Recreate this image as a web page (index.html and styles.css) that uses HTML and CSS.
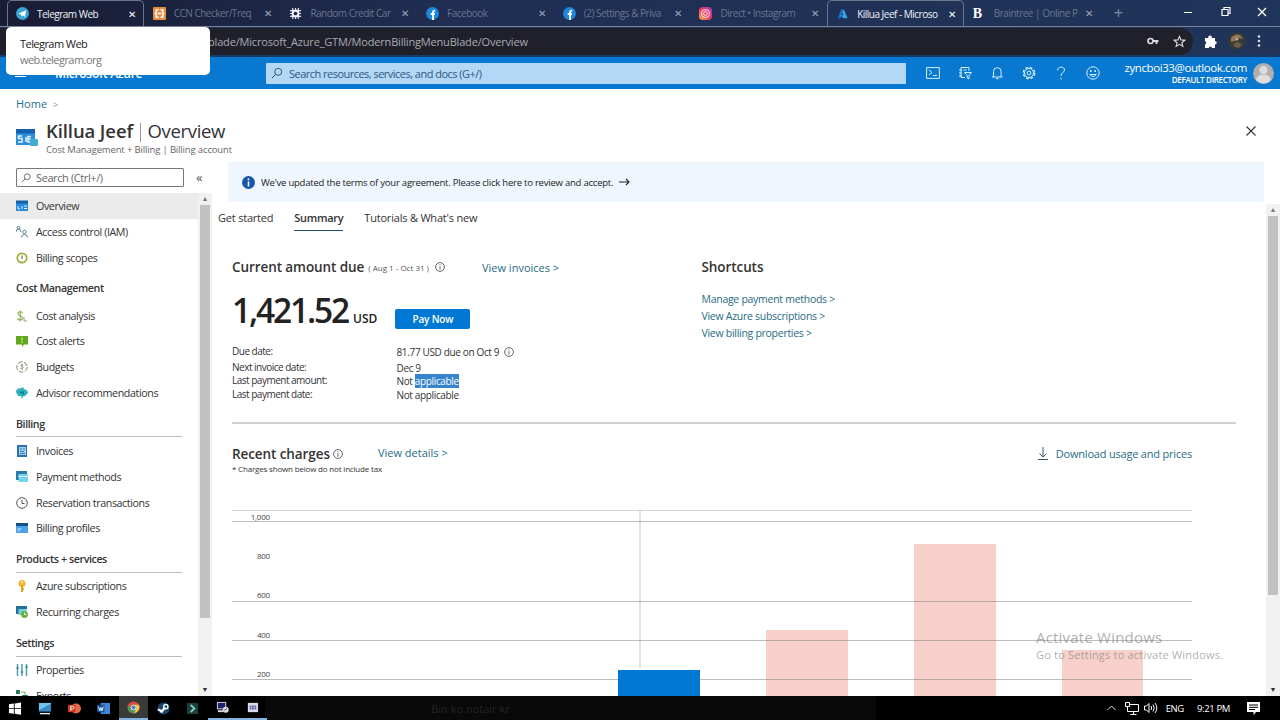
FILE: index.html
```html
<!DOCTYPE html>
<html lang="en">
<head>
    <meta charset="UTF-8">
    <meta name="viewport" content="width=device-width, initial-scale=1.0">
    <title>Killua Jeef - Microsoft Azure</title>
    <link rel="stylesheet" href="styles.css">
</head>
<body>
    <!-- Browser tabs -->
    <div class="tabs">
        <div class="tab active">
            <svg class="favicon" viewBox="0 0 14 14"><circle cx="7" cy="7" r="7" fill="#37a5d2"/><path d="M2.5 7 11 3.4 9.6 10.8 7 9 5.6 10.4 5.3 8z" fill="#fff"/></svg>
            <span class="tab-title">Telegram Web</span><span class="close">✕</span>
        </div>
        <div class="tab">
            <svg class="favicon" viewBox="0 0 14 14"><rect width="14" height="14" rx="1" fill="#e88b3e"/><path d="M6 3H3.500v3L2.500 7l1 1v3H6M8 3h2.500v3l1 1-1 1v3H8M5 7h4" fill="none" stroke="#fff" stroke-width="1.500"/></svg>
            <span class="tab-title">CCN Checker/Treq</span><span class="close">✕</span>
        </div>
        <div class="tab">
            <svg class="favicon" viewBox="0 0 14 14"><path d="M4 1v12M7 1v12M10 1v12M1 4h12M1 7h12M1 10h12" stroke="#dde" stroke-width="1.300"/><rect x="3" y="3" width="8" height="8" rx="2" fill="#eef"/><circle cx="7" cy="7" r="2" fill="#1d2947"/></svg>
            <span class="tab-title">Random Credit Car</span><span class="close">✕</span>
        </div>
        <div class="tab">
            <svg class="favicon" viewBox="0 0 14 14"><circle cx="7" cy="7" r="7" fill="#1d87dd"/><path d="M7.600 14V5.500q0-1.600 2.200-1.400M5 7.500h4.600" fill="none" stroke="#fff" stroke-width="2"/></svg>
            <span class="tab-title">Facebook</span><span class="close">✕</span>
        </div>
        <div class="tab">
            <svg class="favicon" viewBox="0 0 14 14"><circle cx="7" cy="7" r="7" fill="#1d87dd"/><path d="M7.600 14V5.500q0-1.600 2.200-1.400M5 7.500h4.600" fill="none" stroke="#fff" stroke-width="2"/></svg>
            <span class="tab-title">(2) Settings &amp; Priva</span><span class="close">✕</span>
        </div>
        <div class="tab">
            <svg class="favicon" viewBox="0 0 14 14"><defs><linearGradient id="insta" x1="0" y1="1" x2="1" y2="0"><stop offset="0" stop-color="#fcb045"/><stop offset=".5" stop-color="#e8355f"/><stop offset="1" stop-color="#a13ac4"/></linearGradient></defs><rect width="14" height="14" rx="4" fill="url(#insta)"/><rect x="3" y="3" width="8" height="8" rx="2.500" fill="none" stroke="#fff"/><circle cx="7" cy="7" r="2" fill="none" stroke="#fff"/></svg>
            <span class="tab-title">Direct • Instagram</span><span class="close">✕</span>
        </div>
        <div class="tab active">
            <svg class="favicon" viewBox="0 0 14 14"><path d="M5.500 2.500h3L5 12H1.800z" fill="#1b6fc0"/><path d="M8.500 2.500 12.500 12H8L5 9h3L6.800 6z" fill="#37a3e8"/></svg>
            <span class="tab-title">Killua Jeef - Microso</span><span class="close">✕</span>
        </div>
        <div class="tab">
            <span class="favicon letter">B</span>
            <span class="tab-title">Braintree | Online P</span><span class="close">✕</span>
        </div>
        <span class="new-tab">+</span>
        <div class="window-buttons">
            <svg width="84" height="14" viewBox="0 0 84 14"><path d="M0 7.500h8M38 4.500h6v6h-6zM40 4.500v-2h6v6h-2" fill="none" stroke="#fff" stroke-width="1.200"/><path d="M74 3l8 8M82 3l-8 8" stroke="#fff" stroke-width="1.300"/></svg>
        </div>
    </div>

    <!-- Address bar -->
    <div class="address">
        <div class="omnibox">
            <span class="url">blade/Microsoft_Azure_GTM/ModernBillingMenuBlade/Overview</span>
            <svg width="12" height="12" viewBox="0 0 12 12"><circle cx="3.500" cy="6" r="2.500" fill="none" stroke="#ddd" stroke-width="1.600"/><path d="M6 6h5.500M9.500 6v3" stroke="#ddd" stroke-width="1.800"/></svg>
            <svg width="13" height="13" viewBox="0 0 14 14"><path d="M7 1.500 8.600 5.300l4.200.3-3.200 2.700 1 4L7 10.100l-3.600 2.200 1-4L1.200 5.600l4.200-.3z" fill="none" stroke="#ddd" stroke-width="1.200"/></svg>
        </div>
        <svg width="13" height="13" viewBox="0 0 13 13"><path d="M1 3h3.200a1.900 1.900 0 1 1 3.600 0H11v3a1.700 1.700 0 1 1 0 3.400V13H8a1.600 1.600 0 0 0-3.200 0H1V9.500a1.700 1.700 0 0 0 0-3.300z" fill="#fff"/></svg>
        <svg width="18" height="18" viewBox="0 0 18 18"><circle cx="9" cy="9" r="8.500" fill="#3a3a34"/><path d="M3 6q4-5 9-3l3 4-5-1-3 3-4 1z" fill="#91795b"/><path d="M5 12l4-2 5 2-3 4-4-1z" fill="#6e5c46"/><circle cx="9" cy="7" r="1.500" fill="#c2ab8a"/></svg>
        <svg width="4" height="14" viewBox="0 0 4 14"><circle cx="2" cy="2.500" r="1.300" fill="#ddd"/><circle cx="2" cy="7" r="1.300" fill="#ddd"/><circle cx="2" cy="11.500" r="1.300" fill="#ddd"/></svg>
    </div>

    <!-- Azure top bar -->
    <div class="azure-bar">
        <svg class="menu-icon" width="12" height="10" viewBox="0 0 12 10"><path d="M0 .5h11M0 4.500h11M0 8.500h11" stroke="#fff"/></svg>
        <span class="brand">Microsoft Azure</span>
        <div class="search">
            <svg width="12" height="12" viewBox="0 0 12 12"><circle cx="7.200" cy="4.800" r="3.500" fill="none" stroke="#31577e"/><path d="M4.700 7.300 1 11" stroke="#31577e"/></svg>
            <span>Search resources, services, and docs (G+/)</span>
        </div>
        <div class="bar-icons">
            <svg width="14" height="14" viewBox="0 0 14 14"><path d="M.6 1.600h12.800v10.800H.6zM3 4l3 2.500L3 9M7 9.500h4"/></svg>
            <svg width="14" height="14" viewBox="0 0 14 14"><path d="M11 5V1.500H3v10h4M1 4h3M1 7h3M1 10h3M5.500 4h3M6.500 6.500h7L11 9.500V13L9.200 12V9.500z"/></svg>
            <svg width="14" height="14" viewBox="0 0 14 14"><path d="M2 11h10.500M3.500 11V5.500a3.800 3.800 0 0 1 7.600 0V11M6 12.700h2.500"/></svg>
            <svg width="14" height="14" viewBox="0 0 14 14"><circle cx="7" cy="7" r="5.700" stroke-width="1.300" stroke-dasharray="2.800 1.680"/><circle cx="7" cy="7" r="4.500"/><circle cx="7" cy="7" r="1.900"/></svg>
            <svg width="14" height="14" viewBox="0 0 14 14"><path d="M3.500 4.500C3.500 0 10.500 0 10.500 4 10.500 6.500 7 6.500 7 10M7 11.700v1.600"/></svg>
            <svg width="14" height="14" viewBox="0 0 14 14"><circle cx="7" cy="7" r="6.200"/><path d="M3.700 8.500q3.300 4 6.600 0z"/><path d="M4.800 4v2M9.200 4v2" stroke-width="1.500"/></svg>
        </div>
        <div class="account">
            <div class="email">zyncboi33@outlook.com</div>
            <div class="directory">DEFAULT DIRECTORY</div>
        </div>
        <svg width="21" height="21" viewBox="0 0 21 21"><circle cx="10.500" cy="10.500" r="10.500" fill="#b1aeae"/><circle cx="10.500" cy="7" r="4" fill="#dedcdc"/><path d="M3 17q1-5.500 7.500-5.500T18 17q-7 7-15 0z" fill="#dedcdc"/></svg>
    </div>

    <!-- Tooltip of the first browser tab -->
    <div class="tab-tooltip">
        <div>Telegram Web</div>
        <div class="host">web.telegram.org</div>
    </div>

    <!-- Page title -->
    <div class="blade-header">
        <div class="breadcrumb">Home <span>&gt;</span></div>
        <div class="blade-row">
            <svg width="22" height="18" viewBox="0 0 22 18"><rect width="19" height="5" fill="#1561ae"/><rect y="4.500" width="19" height="11.500" fill="#2d8edb"/><path d="M6 7H2.500v2.500H6V13H2M10 8v5M15 7.500h-3V13h3M12 10h3" fill="none" stroke="#e3f4ff" stroke-width="1.500"/><rect x="14" y="10" width="8" height="7" rx="1" fill="#42aecb"/></svg>
            <div>
                <h1>Killua Jeef <i></i> <span>Overview</span></h1>
                <div class="subtitle">Cost Management + Billing | Billing account</div>
            </div>
            <svg class="blade-close" width="10" height="10" viewBox="0 0 10 10"><path d="M.5.5l9 9M9.500.5l-9 9" stroke="#333" stroke-width="1.100"/></svg>
        </div>
    </div>

    <div class="content">
        <!-- Left menu -->
        <div class="sidebar">
            <div class="side-search">
                <div class="side-input">
                    <svg width="10" height="10" viewBox="0 0 12 12"><circle cx="7.500" cy="4.500" r="3.500" fill="none" stroke="#555"/><path d="M5 7 1 11" stroke="#555"/></svg>
                    Search (Ctrl+/)
                </div>
                <span class="collapse">«</span>
            </div>
            <div class="side-body">
                <div class="menu">
                    <div class="item selected"><svg viewBox="0 0 12 12"><rect y="1" width="12" height="10" fill="#258bdb"/><path d="M0 2h12" stroke="#1661a8" stroke-width="3"/><path d="M2 6v3h2M6 6v3M8 6h3M8 8.500h3" fill="none" stroke="#e0f4ff"/></svg>Overview</div>
                    <div class="item"><svg viewBox="0 0 12 12"><path d="M0 6q0-3 2.500-3T5 6M5.500 11.500q0-3 3-3t3 3" fill="none" stroke="#5d8296"/><circle cx="2.500" cy="1.500" r="1.400" fill="none" stroke="#5d8296"/><circle cx="8.500" cy="6" r="1.700" fill="none" stroke="#5d8296"/></svg>Access control (IAM)</div>
                    <div class="item"><svg viewBox="0 0 12 12"><circle cx="6" cy="6" r="4.700" fill="#fff" stroke="#9caf36" stroke-width="1.700"/><path d="M6 3.500V7" stroke="#668c3a" stroke-width="1.300"/></svg>Billing scopes</div>
                    <h3>Cost Management</h3>
                    <div class="item"><svg viewBox="0 0 12 12"><path d="M6.500 3C6 1 1.500 1.500 2 4c.4 2 4.500 1.500 4.500 4S2 10.500 1.500 8.500M4.200.5v11" fill="none" stroke="#8fb04f" stroke-width="1.100"/><path d="M8 7v4h3" fill="none" stroke="#9a9c90"/></svg>Cost analysis</div>
                    <div class="item"><svg viewBox="0 0 12 12"><path d="M0 1h12v8.500H8L6 12V9.500H0z" fill="#62a81f"/><path d="M6 2.500v3M6 6.500v1.500" stroke="#d9f0ac" stroke-width="1.200"/></svg>Cost alerts</div>
                    <div class="item"><svg viewBox="0 0 12 12"><circle cx="6" cy="6" r="5.200" fill="none" stroke="#81906a" stroke-dasharray="5 1.500"/><path d="M7.500 4Q4.500 3 4.700 5 7.500 5.500 7.300 7 6.500 8.500 4.500 7.500M6 2.500v7" fill="none" stroke="#89967a" stroke-width=".8"/></svg>Budgets</div>
                    <div class="item"><svg viewBox="0 0 12 12"><path d="M0 5q0-4 5-3.700L7 0l1 2q4 1 4 4L9 9l-2 .5L6 12 5 9H2z" fill="#2eb2bf"/><path d="M3 5l5-1v4z" fill="#187f94"/></svg>Advisor recommendations</div>
                    <h3 class="ruled">Billing</h3>
                    <div class="item"><svg viewBox="0 0 12 12"><rect x="1" width="10" height="12" fill="#2b6fae"/><rect x="3" y="2" width="7" height="8" fill="#9fcef1"/><path d="M4 4h2M7 4h2M4 6.500h4M4 8.500h5" stroke="#377bb4"/></svg>Invoices</div>
                    <div class="item"><svg viewBox="0 0 12 12"><path d="M0 0h11v3H3v6H0z" fill="#277cac"/><rect x="2.500" y="3" width="9.500" height="8" fill="#71d5ef"/><path d="M2.500 5.500H12" stroke="#fff"/></svg>Payment methods</div>
                    <div class="item"><svg viewBox="0 0 12 12"><circle cx="6" cy="6" r="5.300" fill="none" stroke="#555"/><path d="M6 3v3.500h2.500" fill="none" stroke="#555"/></svg>Reservation transactions</div>
                    <div class="item"><svg viewBox="0 0 12 12"><rect y="1" width="12" height="10" fill="#4ba1e8"/><path d="M0 2.500h12" stroke="#134f88" stroke-width="3"/><path d="M1.500 7h4M1.500 9h2" stroke="#c7e8ff"/></svg>Billing profiles</div>
                    <h3 class="ruled">Products + services</h3>
                    <div class="item"><svg viewBox="0 0 12 12"><circle cx="6" cy="3.500" r="3.500" fill="#f3b42e"/><path d="M6 5v7M6 9h2" stroke="#eaa51f" stroke-width="2"/><circle cx="6" cy="2.200" r="1" fill="#fff1c2"/></svg>Azure subscriptions</div>
                    <div class="item"><svg viewBox="0 0 12 12"><path d="M0 0h11v3H3v5H0z" fill="#236f96"/><rect x="2.500" y="3" width="8" height="6" fill="#70cedf"/><circle cx="8.500" cy="8.500" r="3.400" fill="#60b23d"/><path d="M8.500 6.500v2.200h1.700" fill="none" stroke="#fff"/></svg>Recurring charges</div>
                    <h3 class="ruled">Settings</h3>
                    <div class="item"><svg viewBox="0 0 12 12"><path d="M1.500 0v12M6 0v12M10.500 0v12" stroke="#429aad" stroke-width="1.400"/><path d="M.3 4h2.400M4.800 8h2.400M9.300 3h2.400" stroke="#235e70"/></svg>Properties</div>
                    <div class="item"><svg viewBox="0 0 12 12"><path d="M0 0h4v4H0zM0 6h4v5H0zM6 5h6v6H6z" fill="#28765f"/><path d="M5 2h4v3" fill="none" stroke="#68b84b"/></svg>Exports</div>
                </div>
                <div class="scrollbar">
                    <span>▲</span>
                    <div class="thumb side-thumb"></div>
                    <span class="down">▼</span>
                </div>
            </div>
        </div>

        <!-- Billing overview -->
        <div class="main">
            <div class="notice">
                <svg width="13" height="13" viewBox="0 0 13 13"><circle cx="6.500" cy="6.500" r="6.500" fill="#1655a8"/><path d="M6.500 2.500v1.800M6.500 5.500v5" stroke="#fff" stroke-width="1.600"/></svg>
                <span>We've updated the terms of your agreement. Please click here to review and accept.</span>
                <svg width="11" height="8" viewBox="0 0 11 8"><path d="M0 4h10M7 1l3 3-3 3" fill="none" stroke="#222" stroke-width="1.100"/></svg>
            </div>
            <div class="main-body">
                <div class="overview">
                    <div class="page-tabs">
                        <span class="t-start">Get started</span>
                        <span class="t-summary">Summary</span>
                        <span class="t-tutorials">Tutorials &amp; What's new</span>
                    </div>
                    <div class="top-row">
                        <div class="due">
                            <div class="due-title">
                                <h2>Current amount due</h2>
                                <small>( Aug 1 - Oct 31 )</small>
                                <svg class="info" viewBox="0 0 10 10"><circle cx="5" cy="5" r="4.400"/><path d="M5 2.200v1M5 4.200v3.500"/></svg>
                                <a class="view-invoices">View invoices &gt;</a>
                            </div>
                            <div class="amount">
                                <b>1,421.52</b><strong>USD</strong>
                                <button>Pay Now</button>
                            </div>
                            <dl class="facts">
                                <dt>Due date:</dt><dd>81.77 USD due on Oct 9 <svg class="info" viewBox="0 0 10 10"><circle cx="5" cy="5" r="4.400"/><path d="M5 2.200v1M5 4.200v3.500"/></svg></dd>
                                <dt>Next invoice date:</dt><dd>Dec 9</dd>
                                <dt>Last payment amount:</dt><dd>Not <mark>applicable</mark></dd>
                                <dt>Last payment date:</dt><dd>Not applicable</dd>
                            </dl>
                        </div>
                        <div class="shortcuts">
                            <h2>Shortcuts</h2>
                            <a>Manage payment methods &gt;</a>
                            <a>View Azure subscriptions &gt;</a>
                            <a>View billing properties &gt;</a>
                        </div>
                    </div>
                    <hr>
                    <div class="charges-head">
                        <h2>Recent charges</h2>
                        <svg class="info" viewBox="0 0 10 10"><circle cx="5" cy="5" r="4.400"/><path d="M5 2.200v1M5 4.200v3.500"/></svg>
                        <a class="view-details">View details &gt;</a>
                        <a class="download"><svg width="10" height="13" viewBox="0 0 10 13"><path d="M5 0v10M1.500 6.500 5 10l3.500-3.500M0 12.500h10" fill="none" stroke="#33586f"/></svg>Download usage and prices</a>
                    </div>
                    <div class="note">* Charges shown below do not include tax</div>
                    <svg class="chart" width="960" height="186" viewBox="0 0 960 186">
                        <path d="M0 .5h960" stroke="#d6d6d6"/>
                        <path d="M408 0v158" stroke="#c8c8c8"/>
                        <rect x="534" y="120" width="82" height="66" fill="#f7d0ca"/>
                        <rect x="682" y="34" width="82" height="152" fill="#f7d0ca"/>
                        <rect x="830" y="140" width="81" height="46" fill="#f7d0ca"/>
                        <path d="M0 11.500h960M0 91.500h960M0 130.500h960M0 169.500h960" stroke="#7a7a7a" stroke-opacity=".5"/>
                        <rect x="386" y="160" width="82" height="26" fill="#0078d4"/>
                        <g class="axis">
                            <text x="38" y="10">1,000</text>
                            <text x="38" y="49">800</text>
                            <text x="38" y="88">600</text>
                            <text x="38" y="128">400</text>
                            <text x="38" y="167">200</text>
                        </g>
                    </svg>
                </div>
                <div class="scrollbar">
                    <span>▲</span>
                    <div class="thumb main-thumb"></div>
                    <span class="down">▼</span>
                </div>
            </div>
        </div>
    </div>

    <div class="watermark">
        <div class="big">Activate Windows</div>
        <div>Go to Settings to activate Windows.</div>
    </div>

    <!-- Windows taskbar -->
    <div class="taskbar">
        <div class="app"><svg viewBox="0 0 14 14"><path d="M1 2.500 6.300 1.700v5H1zM7.200 1.600 14 .6v6.100H7.200zM1 7.600h5.300v5L1 11.800zM7.200 7.600H14v6l-6.800-1z" fill="#fff"/></svg></div>
        <div class="app"><svg viewBox="0 0 14 14"><rect x="1" y="1" width="13" height="9" fill="#6fc0ec"/><path d="M1 9 14 2v8H1z" fill="#348ac4"/><path d="M2 12.500h11" stroke="#dcefff" stroke-width="1.500"/></svg></div>
        <div class="app"><svg viewBox="0 0 14 14"><circle cx="8.500" cy="7" r="5.500" fill="#e56a4b"/><rect y="3" width="8" height="8" fill="#c4381f"/><path d="M3 9.500v-5h2q1.500 0 1.500 1.500T5 7.500H3" fill="none" stroke="#fff"/></svg></div>
        <div class="app"><svg viewBox="0 0 14 14"><rect x="4" y="1" width="10" height="12" fill="#3f87d2"/><rect y="3" width="8" height="8" fill="#174f9d"/><path d="M1.500 5 3 9.500 4.200 6l1.200 3.500L6.800 5" fill="none" stroke="#fff"/></svg></div>
        <div class="app current"><svg viewBox="0 0 14 14"><circle cx="7" cy="7" r="6.500" fill="#dd4e3c"/><path d="M.8 4.500Q0 12 7.500 13.500L10 8 5 9z" fill="#3aa356"/><path d="M7 4h6q2 7-5.500 9.500L10 8z" fill="#f0c64c"/><circle cx="7" cy="7" r="3" fill="#fff"/><circle cx="7" cy="7" r="2.300" fill="#5587bd"/></svg></div>
        <div class="app"><svg viewBox="0 0 14 14"><circle cx="7" cy="7" r="6.500" fill="#17476c"/><path d="M1 8l4 2 4-4" fill="none" stroke="#fff" stroke-width="2.200"/><circle cx="9.500" cy="5" r="2.300" fill="none" stroke="#fff" stroke-width="1.400"/><circle cx="5" cy="10" r="1.700" fill="#fff"/></svg></div>
        <div class="app"><svg viewBox="0 0 14 14"><rect x="1" y="1" width="12" height="12" fill="#203e3e"/><path d="M5 3l4 4-4 4" fill="none" stroke="#70dbb0" stroke-width="2"/></svg></div>
        <div class="app open"><svg viewBox="0 0 14 14"><rect x="1.500" y="1.500" width="9" height="7" fill="#19246d" stroke="#dcdcf4"/><path d="M2 11h6" stroke="#ddd" stroke-width="2"/><circle cx="10.500" cy="9.500" r="3.200" fill="#ddd"/><path d="M9 10l3-2" stroke="#3c477e"/></svg></div>
        <div class="app open"><svg viewBox="0 0 14 14"><rect x="2" y="2" width="11" height="10" fill="#d9d9ee"/><rect x="4" y="5" width="7" height="4" fill="#6265a0"/><path d="M6 6v2M9 6v2" stroke="#fff"/></svg></div>
        <div class="ghost">Bin ko notair kr</div>
        <div class="tray">
            <svg width="9" height="6" viewBox="0 0 9 6"><path d="M.5 5 4.500 1l4 4" fill="none" stroke="#ddd"/></svg>
            <svg width="14" height="13" viewBox="0 0 14 13"><path d="M4 2.500h9.500v7H4M8.500 9.500v3M5.500 12.500h6M.5.5h4v4h-4zM2.500 4.500v5H4" fill="none" stroke="#fff"/></svg>
            <svg width="14" height="12" viewBox="0 0 14 12"><path d="M.5 4h2L5 1.500v9L2.500 8h-2zM7 4q1.300 2 0 4M9 2.500q2.500 3.500 0 7M11 1q3.700 5 0 10" fill="none" stroke="#fff"/></svg>
            <span class="lang">ENG</span>
            <span class="clock">9:21 PM</span>
            <svg width="13" height="13" viewBox="0 0 13 13"><path d="M0 0h13v10H9l-2.500 3V10H0z" fill="#fff"/><path d="M2 3h9M2 5.300h9M2 7.500h6" stroke="#000"/></svg>
        </div>
    </div>
</body>
</html>
```
FILE: styles.css
```css
/* CSS styles */
* {
    box-sizing: border-box;
}

body {
    font-family: "Open Sans", "Noto Sans", sans-serif;
    margin: 0;
    width: 1280px;
    height: 720px;
    overflow: hidden;
    display: flex;
    flex-direction: column;
    background-color: #fff;
    color: #333;
    font-size: 11px;
    white-space: nowrap;
}

svg {
    flex: none;
}

h1, h2, h3 {
    margin: 0;
    font-weight: 600;
}

/* Browser */
.tabs {
    height: 27px;
    flex: none;
    display: flex;
    padding-left: 7px;
    background: linear-gradient(90deg, #191c33, #1f2e52 35%, #20355a);
    border-bottom: 1px solid #78859c;
}

.tab {
    width: 136.700px;
    display: flex;
    align-items: center;
    padding: 0 7px 0 9px;
    border-right: 1px solid transparent;
    color: #69758d;
}

.tab.active {
    color: #f2f4f8;
    border: 1px solid #68768e;
    border-bottom: none;
    border-radius: 5px 5px 0 0;
    padding-left: 8px;
}

.favicon {
    width: 13px;
    height: 13px;
    flex: none;
}

.letter {
    font: bold 14px/13px "Liberation Serif", serif;
    color: #fff;
}

.tab-title {
    margin-left: 8px;
    font-size: 10px;
    letter-spacing: -0.500px;
}

.close {
    margin-left: auto;
    font-size: 10px;
    color: #a0a8b8;
}

.active .close {
    color: #fff;
}

.new-tab {
    margin: 2px 0 0 13px;
    font-size: 17px;
    line-height: 22px;
    color: #7d8ba3;
}

.window-buttons {
    margin: 5px 12px 0 auto;
}

.address {
    height: 30px;
    flex: none;
    display: flex;
    align-items: center;
    background-color: #20345a;
    padding: 0 15px 0 0;
    gap: 11px;
    border-bottom: 2px solid #183a68;
}

.omnibox {
    height: 27px;
    width: 1193px;
    background-color: #20202b;
    border-radius: 0 14px 14px 0;
    display: flex;
    align-items: center;
    gap: 14px;
    padding: 0 7px 0 208px;
}

.url {
    margin-right: auto;
    color: #a9aab0;
    font-size: 11px;
    letter-spacing: -0.180px;
}

.tab-tooltip {
    position: absolute;
    left: 6px;
    top: 27px;
    width: 204px;
    height: 48px;
    border-radius: 5px;
    background-color: #fff;
    padding: 9px 14px;
    font-size: 11px;
    line-height: 16px;
    letter-spacing: -0.550px;
    color: #222;
}

.tab-tooltip .host {
    color: #777;
}

/* Azure bar */
.azure-bar {
    height: 32px;
    flex: none;
    display: flex;
    align-items: center;
    background-color: #0878d0;
    color: #fff;
    padding: 0 6px 0 15px;
}

.brand {
    margin-left: 28px;
    width: 211px;
    font-size: 12px;
    font-weight: 600;
    letter-spacing: -0.300px;
}

.search {
    width: 640px;
    height: 21px;
    display: flex;
    align-items: center;
    gap: 6px;
    padding-left: 5px;
    border-radius: 1px;
    background-color: #b2d8f6;
    color: #31577e;
    letter-spacing: -0.520px;
}

.bar-icons {
    display: flex;
    gap: 18px;
    margin-left: 20px;
}

.bar-icons svg {
    fill: none;
    stroke: #d5f3ff;
}

.account {
    margin-left: auto;
    margin-right: 6px;
    text-align: right;
    line-height: 12px;
}

.email {
    font-size: 11.500px;
    letter-spacing: -0.400px;
    line-height: 13px;
}

.directory {
    font-size: 8px;
    font-weight: 600;
    letter-spacing: -0.300px;
}

/* Page title */
.blade-header {
    height: 73px;
    flex: none;
    padding: 7px 24px 0 16px;
}

.breadcrumb {
    color: #23708f;
    font-size: 11px;
    line-height: 16px;
}

.breadcrumb span {
    margin-left: 3px;
    font-size: 9px;
    color: #888;
}

.blade-row {
    display: flex;
    align-items: center;
    gap: 8px;
    margin-top: 5px;
}

h1 {
    font-size: 18.500px;
    line-height: 25px;
    letter-spacing: -0.100px;
}

h1 span {
    font-weight: 400;
    letter-spacing: -0.320px;
}

h1 i {
    display: inline-block;
    height: 19px;
    border-left: 1px solid #999;
    margin: 0 2px;
    vertical-align: -4px;
}

.subtitle {
    font-size: 9.500px;
    line-height: 14px;
    letter-spacing: -0.150px;
    color: #666;
}

.blade-close {
    margin-left: auto;
    margin-bottom: 13px;
}

.content {
    flex: 1;
    min-height: 0;
    display: flex;
}

/* Left menu */
.sidebar {
    width: 212px;
    display: flex;
    flex-direction: column;
}

.side-search {
    height: 31.300px;
    flex: none;
    display: flex;
    padding: 6px 0 0 16px;
}

.side-input {
    width: 168px;
    height: 19px;
    border: 1px solid #777;
    border-radius: 1px;
    display: flex;
    align-items: center;
    gap: 5px;
    padding-left: 4px;
    letter-spacing: -0.400px;
    color: #666;
}

.collapse {
    margin-left: 12px;
    font-size: 13px;
    line-height: 18px;
    color: #555;
}

.side-body {
    flex: 1;
    min-height: 0;
    display: flex;
}

.menu {
    width: 198px;
    overflow: hidden;
}

.item {
    height: 25.700px;
    display: flex;
    align-items: center;
    gap: 8px;
    padding-left: 16px;
    font-size: 10.700px;
    letter-spacing: -0.400px;
}

.item svg {
    width: 12px;
    height: 12px;
}

.selected {
    background-color: #ebebeb;
}

.menu h3 {
    height: 32.600px;
    margin: 0 16px 0 16px;
    padding-top: 11px;
    line-height: 15px;
    font-size: 10.700px;
    letter-spacing: -0.420px;
}

.menu .ruled {
    height: 31.600px;
    border-bottom: 1px solid #bbb;
    margin-bottom: 1px;
}

.scrollbar {
    width: 14px;
    flex: none;
    background-color: #f1f1f1;
    display: flex;
    flex-direction: column;
    align-items: center;
    font-size: 7px;
    line-height: 12px;
    color: #777;
}

.thumb {
    width: 10px;
    background-color: #c1c1c1;
}

.side-thumb {
    height: 413px;
}

.main-thumb {
    height: 379px;
}

.down {
    margin-top: auto;
    color: #333;
}

/* Billing overview */
.main {
    flex: 1;
    min-width: 0;
    display: flex;
    flex-direction: column;
}

.notice {
    height: 40px;
    flex: none;
    margin: 0 16px;
    padding-left: 14px;
    display: flex;
    align-items: center;
    gap: 6px;
    background-color: #eff6fe;
    font-size: 9.500px;
    letter-spacing: -0.220px;
    color: #222;
}

.main-body {
    flex: 1;
    min-height: 0;
    display: flex;
    padding-top: 2px;
}

.overview {
    flex: 1;
    min-width: 0;
    padding-left: 20px;
}

.page-tabs {
    display: flex;
    margin-left: -14px;
    height: 27px;
    line-height: 27px;
    letter-spacing: -0.200px;
}

.t-summary {
    margin: 0 21px;
    font-weight: 600;
    border-bottom: 1px solid #1f4f72;
    letter-spacing: -0.300px;
}

.top-row {
    display: flex;
    height: 191px;
}

.due {
    width: 469.500px;
}

.due-title {
    display: flex;
    align-items: center;
    height: 20px;
    margin-top: 26px;
}

h2 {
    font-size: 13.500px;
    line-height: 20px;
    letter-spacing: -0.080px;
}

.due-title small {
    font-size: 8px;
    margin: 1px 6px 0 4px;
    color: #555;
}

.info {
    width: 10px;
    height: 10px;
    fill: none;
    stroke: #555;
    stroke-width: 0.900;
    vertical-align: -1px;
}

a {
    color: #286b84;
}

.view-invoices {
    margin-left: 37px;
    margin-top: 1px;
}

.amount {
    display: flex;
    align-items: baseline;
    height: 58px;
    color: #222;
}

.amount b {
    font-size: 33.500px;
    line-height: 67px;
    font-weight: 600;
    letter-spacing: -2.150px;
}

.amount strong {
    font-size: 12px;
    font-weight: 600;
    margin-left: 5px;
}

.amount button {
    width: 75px;
    height: 20px;
    margin-left: 18px;
    padding: 0;
    border: none;
    border-radius: 2px;
    background-color: #0078d4;
    color: #fff;
    font: 600 10px/20px "Open Sans", sans-serif;
    letter-spacing: -0.200px;
}

.facts {
    margin: 9px 0 0;
    display: grid;
    grid-template-columns: 164.500px 1fr;
    grid-template-rows: 15.500px 13.800px 13.800px 14px;
    font-size: 10px;
    line-height: 14px;
    letter-spacing: -0.350px;
}

.facts dt {
    letter-spacing: -0.500px;
}

.facts dd {
    margin: 1px 0 0;
}

.facts dd svg {
    margin-left: 3px;
}

mark {
    background-color: #3584cc;
    color: #fff;
}

.shortcuts h2 {
    margin: 26px 0 14px;
}

.shortcuts a {
    display: block;
    line-height: 17px;
    font-size: 10.500px;
    letter-spacing: -0.280px;
}

hr {
    width: 1004px;
    margin: 0;
    border: none;
    border-top: 2px solid #d0d0d0;
}

.charges-head {
    display: flex;
    align-items: center;
    width: 960px;
    height: 20px;
    margin-top: 20px;
}

.charges-head .info {
    margin-left: 3px;
}

.view-details {
    margin: -4px 0 0 35px;
}

.download {
    display: flex;
    align-items: center;
    gap: 8px;
    margin: -2px 0 0 auto;
    letter-spacing: -0.200px;
}

.note {
    font-size: 8px;
    line-height: 10px;
    letter-spacing: -0.180px;
}

.chart {
    display: block;
    margin-top: 36px;
}

.axis {
    font-size: 8px;
    text-anchor: end;
    fill: #444;
    letter-spacing: -0.200px;
}

.watermark {
    position: absolute;
    left: 1036px;
    top: 627px;
    font-size: 11px;
    line-height: 16px;
    letter-spacing: 0.200px;
    color: rgba(120, 120, 120, 0.600);
}

.watermark .big {
    font-size: 15px;
    line-height: 20px;
}

/* Taskbar */
.taskbar {
    height: 24px;
    flex: none;
    display: flex;
    background: linear-gradient(90deg, #000 265px, #090909 265px, #090909 876px, #000 876px);
    color: #fff;
}

.app {
    width: 29.700px;
    display: flex;
    align-items: center;
    justify-content: center;
}

.app svg {
    width: 13px;
    height: 13px;
}

.current {
    background-color: #393b3a;
}

.current, .open {
    border-bottom: 2px solid #83b5df;
}

.ghost {
    margin-left: 164px;
    line-height: 25px;
    color: #232323;
}

.tray {
    margin-left: auto;
    padding-right: 20px;
    display: flex;
    align-items: center;
}

.tray svg {
    margin-right: 5px;
}

.tray svg:last-child {
    margin-right: 0;
}

.tray svg:first-child {
    margin-right: 9px;
}

.lang, .clock {
    font-size: 9.500px;
    margin-left: 3px;
    letter-spacing: -0.350px;
}

.clock {
    margin: 0 17px 0 13px;
}
```
